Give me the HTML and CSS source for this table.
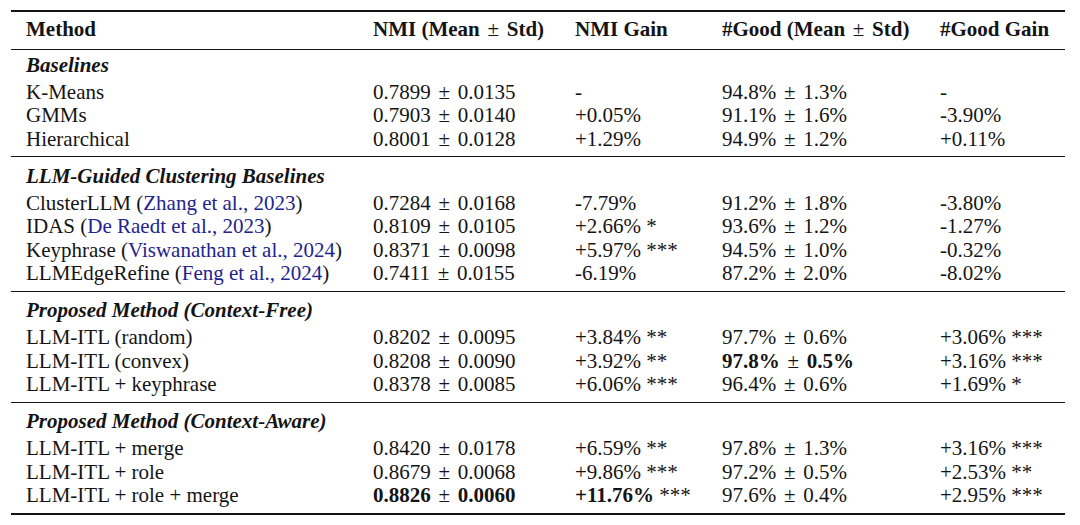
FILE: index.html
```html
<!DOCTYPE html>
<html>
<head>
<meta charset="utf-8">
<link rel="stylesheet" href="styles.css">
</head>
<body>
<table class="results">
  <colgroup>
    <col class="c-method">
    <col class="c-nmi">
    <col class="c-nmigain">
    <col class="c-good">
    <col class="c-goodgain">
  </colgroup>
  <thead>
    <tr>
      <th>Method</th>
      <th>NMI (Mean <span class="pm">±</span> Std)</th>
      <th>NMI Gain</th>
      <th>#Good (Mean <span class="pm">±</span> Std)</th>
      <th>#Good Gain</th>
    </tr>
  </thead>
  <tbody class="section first">
    <tr class="title"><td colspan="5">Baselines</td></tr>
    <tr><td>K-Means</td><td>0.7899 <span class="pm">±</span> 0.0135</td><td>-</td><td>94.8% <span class="pm">±</span> 1.3%</td><td>-</td></tr>
    <tr><td>GMMs</td><td>0.7903 <span class="pm">±</span> 0.0140</td><td>+0.05%</td><td>91.1% <span class="pm">±</span> 1.6%</td><td>-3.90%</td></tr>
    <tr class="last"><td>Hierarchical</td><td>0.8001 <span class="pm">±</span> 0.0128</td><td>+1.29%</td><td>94.9% <span class="pm">±</span> 1.2%</td><td>+0.11%</td></tr>
  </tbody>
  <tbody class="section">
    <tr class="title"><td colspan="5">LLM-Guided Clustering Baselines</td></tr>
    <tr><td>ClusterLLM (<span class="cite">Zhang et al., 2023</span>)</td><td>0.7284 <span class="pm">±</span> 0.0168</td><td>-7.79%</td><td>91.2% <span class="pm">±</span> 1.8%</td><td>-3.80%</td></tr>
    <tr><td>IDAS (<span class="cite">De Raedt et al., 2023</span>)</td><td>0.8109 <span class="pm">±</span> 0.0105</td><td>+2.66% *</td><td>93.6% <span class="pm">±</span> 1.2%</td><td>-1.27%</td></tr>
    <tr><td>Keyphrase (<span class="cite">Viswanathan et al., 2024</span>)</td><td>0.8371 <span class="pm">±</span> 0.0098</td><td>+5.97% ***</td><td>94.5% <span class="pm">±</span> 1.0%</td><td>-0.32%</td></tr>
    <tr class="last"><td>LLMEdgeRefine (<span class="cite">Feng et al., 2024</span>)</td><td>0.7411 <span class="pm">±</span> 0.0155</td><td>-6.19%</td><td>87.2% <span class="pm">±</span> 2.0%</td><td>-8.02%</td></tr>
  </tbody>
  <tbody class="section">
    <tr class="title"><td colspan="5">Proposed Method (Context-Free)</td></tr>
    <tr><td>LLM-ITL (random)</td><td>0.8202 <span class="pm">±</span> 0.0095</td><td>+3.84% **</td><td>97.7% <span class="pm">±</span> 0.6%</td><td>+3.06% ***</td></tr>
    <tr><td>LLM-ITL (convex)</td><td>0.8208 <span class="pm">±</span> 0.0090</td><td>+3.92% **</td><td><b>97.8%</b> <span class="pm">±</span> <b>0.5%</b></td><td>+3.16% ***</td></tr>
    <tr class="last"><td>LLM-ITL + keyphrase</td><td>0.8378 <span class="pm">±</span> 0.0085</td><td>+6.06% ***</td><td>96.4% <span class="pm">±</span> 0.6%</td><td>+1.69% *</td></tr>
  </tbody>
  <tbody class="section">
    <tr class="title"><td colspan="5">Proposed Method (Context-Aware)</td></tr>
    <tr><td>LLM-ITL + merge</td><td>0.8420 <span class="pm">±</span> 0.0178</td><td>+6.59% **</td><td>97.8% <span class="pm">±</span> 1.3%</td><td>+3.16% ***</td></tr>
    <tr><td>LLM-ITL + role</td><td>0.8679 <span class="pm">±</span> 0.0068</td><td>+9.86% ***</td><td>97.2% <span class="pm">±</span> 0.5%</td><td>+2.53% **</td></tr>
    <tr class="last"><td>LLM-ITL + role + merge</td><td><b>0.8826</b> <span class="pm">±</span> <b>0.0060</b></td><td><b>+11.76%</b> ***</td><td>97.6% <span class="pm">±</span> 0.4%</td><td>+2.95% ***</td></tr>
  </tbody>
</table>
</body>
</html>
```
FILE: styles.css
```css
html, body {
  margin: 0;
  padding: 0;
  background: #ffffff;
}

body {
  padding: 10px 0 0 11px;
  font-family: "Liberation Serif", "Times New Roman", serif;
  font-size: 21px;
  color: #141414;
}

.results {
  width: 1054px;
  table-layout: fixed;
  border-collapse: collapse;
  border-top: 2px solid #141414;
  border-bottom: 2px solid #141414;
}

.c-method { width: 362px; }
.c-nmi { width: 202px; }
.c-nmigain { width: 147px; }
.c-good { width: 218px; }
.c-goodgain { width: 125px; }

.results th,
.results td {
  padding: 0;
  line-height: 23.5px;
  text-align: left;
  white-space: nowrap;
}

.results th:first-child,
.results td:first-child {
  padding-left: 15px;
}

.results th {
  font-weight: bold;
  padding-top: 6px;
  padding-bottom: 7px;
}

.section {
  border-top: 1px solid #141414;
}

.title td {
  font-weight: bold;
  font-style: italic;
  padding-top: 7.5px;
  padding-bottom: 3.5px;
}

.section.first .title td {
  padding-top: 4px;
}

.last td {
  padding-bottom: 5px;
}

.pm {
  font-weight: normal;
  margin: 0 2.5px;
}

.cite {
  color: #23238f;
}
```
